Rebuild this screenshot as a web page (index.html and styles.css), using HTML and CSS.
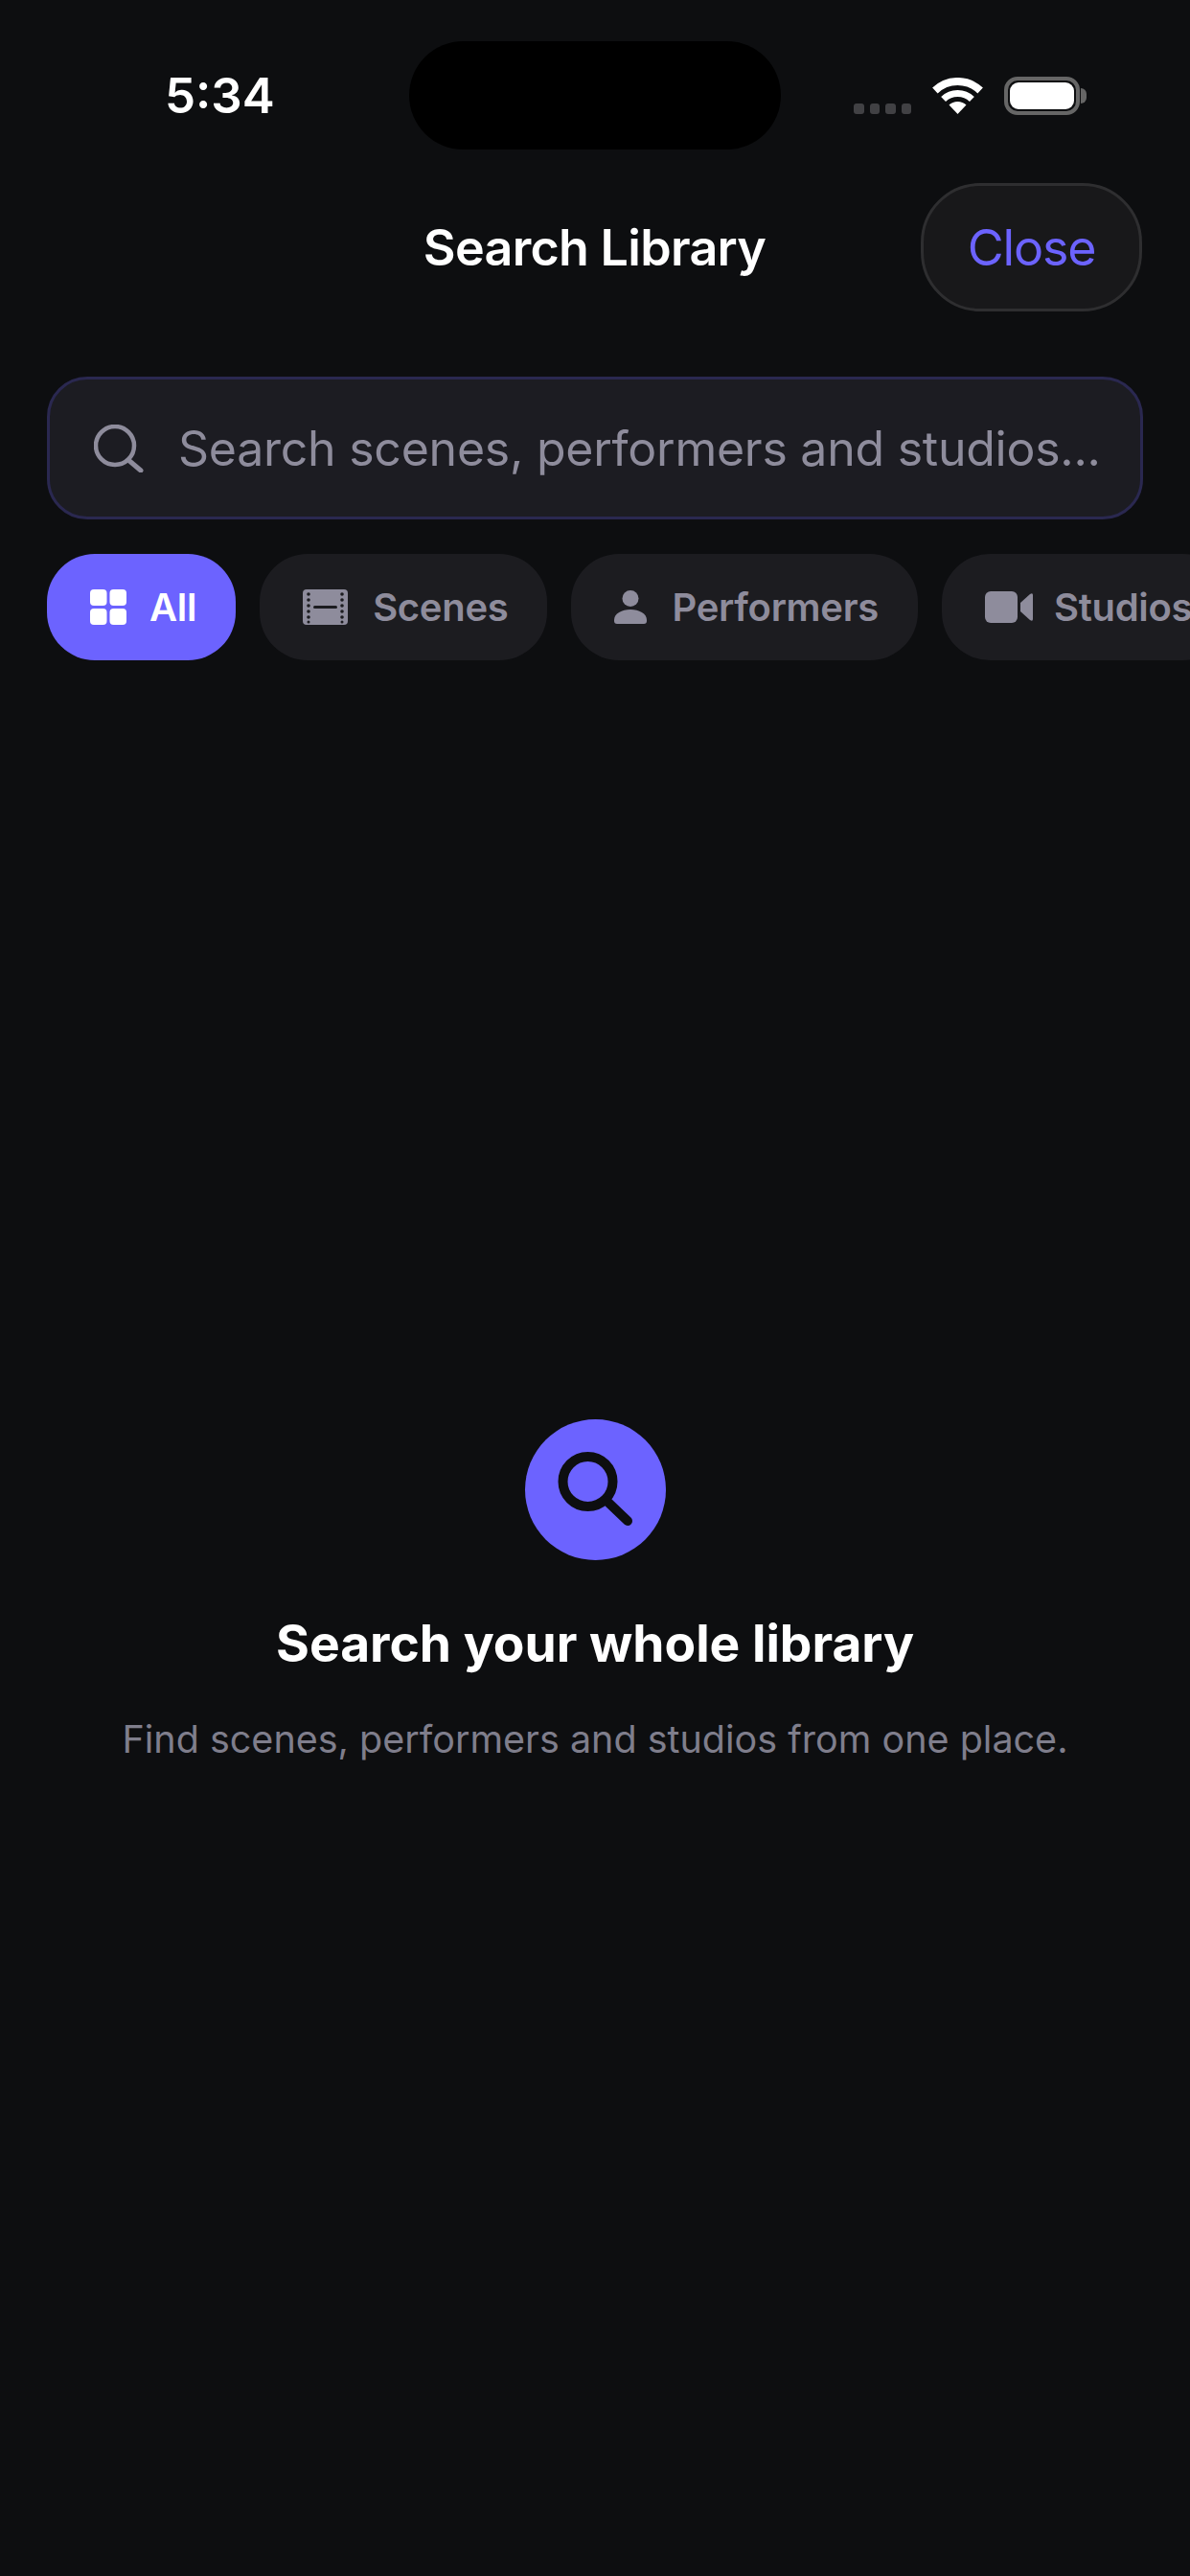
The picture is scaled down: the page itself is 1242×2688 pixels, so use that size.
FILE: index.html
```html
<!DOCTYPE html>
<html>

<head>
    <title>Search Library</title>
    <link rel="stylesheet" href="styles.css">
</head>

<body>
    <div class="screen">
        <!-- Status bar -->
        <div class="status-bar">
            <div class="time">5:34</div>
            <div class="island"></div>
            <div class="status-icons">
                <div class="signal"><span></span><span></span><span></span><span></span></div>
                <svg class="wifi" viewBox="0 0 53 38">
                    <path d="M2.9 13.5A34 34 0 0 1 50.1 13.5" fill="none" stroke="#fff" stroke-width="8" />
                    <path d="M11.6 22.5A21.5 21.5 0 0 1 41.4 22.5" fill="none" stroke="#fff" stroke-width="7" />
                    <path d="M17.5 28.6A13 13 0 0 1 35.5 28.6L26.5 38Z" fill="#fff" />
                </svg>
                <div class="battery">
                    <div class="battery-level"></div>
                    <div class="battery-nub"></div>
                </div>
            </div>
        </div>

        <!-- Header -->
        <div class="header">
            <div></div>
            <div class="title">Search Library</div>
            <button class="close-btn">Close</button>
        </div>

        <!-- Search box -->
        <div class="search-box">
            <svg class="search-icon" viewBox="0 0 52 50">
                <circle cx="22" cy="22" r="20" fill="none" stroke="#8e8c9c" stroke-width="4.5" />
                <path d="M36 37L49 48" fill="none" stroke="#8e8c9c" stroke-width="5" stroke-linecap="round" />
            </svg>
            <div class="placeholder">Search scenes, performers and studios...</div>
        </div>

        <!-- Filter chips -->
        <div class="chips">
            <div class="chip chip-active">
                <svg class="icon-all" viewBox="0 0 38 37">
                    <rect x="0" y="0" width="17.5" height="17" rx="4" fill="#fff" />
                    <rect x="20.5" y="0" width="17.5" height="17" rx="4" fill="#fff" />
                    <rect x="0" y="20" width="17.5" height="17" rx="4" fill="#fff" />
                    <rect x="20.5" y="20" width="17.5" height="17" rx="4" fill="#fff" />
                </svg>
                <span>All</span>
            </div>
            <div class="chip">
                <svg class="icon-scenes" viewBox="0 0 47 37">
                    <rect width="47" height="37" rx="4" fill="#8e8c9c" />
                    <g fill="#1c1c20">
                        <circle cx="6" cy="5" r="1.8" />
                        <circle cx="6" cy="11" r="1.8" />
                        <circle cx="6" cy="17" r="1.8" />
                        <circle cx="6" cy="23" r="1.8" />
                        <circle cx="6" cy="29" r="1.8" />
                        <circle cx="6" cy="34" r="1.5" />
                        <circle cx="41" cy="5" r="1.8" />
                        <circle cx="41" cy="11" r="1.8" />
                        <circle cx="41" cy="17" r="1.8" />
                        <circle cx="41" cy="23" r="1.8" />
                        <circle cx="41" cy="29" r="1.8" />
                        <circle cx="41" cy="34" r="1.5" />
                        <rect x="11" y="17" width="25" height="3" rx="1.5" />
                    </g>
                </svg>
                <span>Scenes</span>
            </div>
            <div class="chip">
                <svg class="icon-performers" viewBox="0 0 34 35">
                    <circle cx="17" cy="8.5" r="8.5" fill="#8e8c9c" />
                    <path d="M0 31C0 24 8 20 17 20S34 24 34 31V32Q34 35 31 35H3Q0 35 0 32Z" fill="#8e8c9c" />
                </svg>
                <span>Performers</span>
            </div>
            <div class="chip">
                <svg class="icon-studios" viewBox="0 0 50 33">
                    <rect width="34" height="33" rx="6" fill="#8e8c9c" />
                    <path d="M37 12L47 3Q50 1 50 4V29Q50 32 47 30L37 21Z" fill="#8e8c9c" />
                </svg>
                <span>Studios</span>
            </div>
        </div>

        <!-- Empty state -->
        <div class="empty">
            <div class="empty-circle">
                <svg class="empty-icon" viewBox="0 0 147 147">
                    <circle cx="65.5" cy="65" r="26" fill="none" stroke="#0d0e10" stroke-width="10" />
                    <path d="M85 85L107 106" fill="none" stroke="#0d0e10" stroke-width="10" stroke-linecap="round" />
                </svg>
            </div>
            <div class="empty-title">Search your whole library</div>
            <div class="empty-text">Find scenes, performers and studios from one place.</div>
        </div>
    </div>
</body>

</html>
```

FILE: styles.css
```css
* {
    box-sizing: border-box;
}

html,
body {
    margin: 0;
    background-color: #0d0e10;
}

.screen {
    width: 1242px;
    height: 2688px;
    overflow: hidden;
    font-family: Inter, "Liberation Sans", sans-serif;
    color: #fff;
}

/* Status bar */
.status-bar {
    display: grid;
    grid-template-columns: 427px 388px 1fr;
    height: 191px;
    padding-top: 43px;
}

.time {
    height: 113px;
    padding-left: 172px;
    font-size: 51px;
    font-weight: 600;
    line-height: 114px;
}

.island {
    height: 113px;
    background-color: #000;
    border-radius: 57px;
}

.status-icons {
    display: flex;
    align-items: flex-start;
    height: 113px;
    padding-top: 37px;
    padding-left: 76px;
}

.signal {
    display: flex;
    gap: 6px;
    margin-top: 28px;
}

.signal span {
    width: 10.5px;
    height: 11px;
    background-color: #414144;
    border-radius: 3px;
}

.wifi {
    width: 53px;
    height: 38px;
    margin-left: 22px;
    margin-top: 1px;
}

.battery {
    position: relative;
    width: 79px;
    height: 40px;
    margin-left: 22px;
    padding: 2px;
    border: 4px solid #666;
    border-radius: 14px;
}

.battery-level {
    height: 100%;
    background-color: #fff;
    border-radius: 9px;
}

.battery-nub {
    position: absolute;
    top: 8px;
    right: -11px;
    width: 6px;
    height: 16px;
    background-color: #666;
    border-radius: 0 8px 8px 0;
}

/* Header */
.header {
    display: grid;
    grid-template-columns: 1fr auto 1fr;
    align-items: center;
    height: 134px;
    padding: 0 50px 0 49px;
}

.title {
    font-size: 52px;
    font-weight: 600;
    letter-spacing: -0.7px;
}

.close-btn {
    justify-self: end;
    width: 231px;
    height: 134px;
    padding: 0;
    font-family: inherit;
    font-size: 52px;
    letter-spacing: -1.2px;
    color: #6c63ff;
    background-color: #18181a;
    border: 3px solid #2e2e30;
    border-radius: 62px;
}

/* Search box */
.search-box {
    display: flex;
    align-items: center;
    gap: 36px;
    height: 149px;
    margin: 68px 49px 0;
    padding-left: 46px;
    background-color: #1c1c22;
    border: 3px solid #2a2850;
    border-radius: 42px;
}

.search-icon {
    width: 52px;
    height: 50px;
}

.placeholder {
    font-size: 50px;
    letter-spacing: -0.25px;
    color: #8e8c9c;
    white-space: nowrap;
}

/* Filter chips */
.chips {
    display: flex;
    gap: 25px;
    margin-top: 36px;
    padding-left: 49px;
}

.chip {
    display: flex;
    flex-shrink: 0;
    align-items: center;
    height: 111px;
    padding: 0 41px 0 45px;
    font-size: 40px;
    font-weight: 600;
    letter-spacing: -0.3px;
    color: #8e8c9c;
    background-color: #1c1c20;
    border-radius: 50px;
}

.chip-active {
    color: #fff;
    background-color: #6c63ff;
}

.icon-all {
    width: 38px;
    height: 37px;
    margin-right: 24px;
}

.icon-scenes {
    width: 47px;
    height: 37px;
    margin-right: 26px;
}

.icon-performers {
    width: 34px;
    height: 35px;
    margin-right: 26px;
}

.icon-studios {
    width: 50px;
    height: 33px;
    margin-right: 22px;
}

/* Empty state */
.empty {
    display: flex;
    flex-direction: column;
    align-items: center;
    margin-top: 792px;
}

.empty-circle {
    width: 147px;
    height: 147px;
    background-color: #6c63ff;
    border-radius: 50%;
}

.empty-icon {
    display: block;
    width: 147px;
    height: 147px;
}

.empty-title {
    margin-top: 52px;
    font-size: 53.3px;
    font-weight: 700;
    line-height: 70px;
}

.empty-text {
    margin-top: 40px;
    font-size: 39.5px;
    line-height: 50px;
    color: #7f7e8c;
}
```
